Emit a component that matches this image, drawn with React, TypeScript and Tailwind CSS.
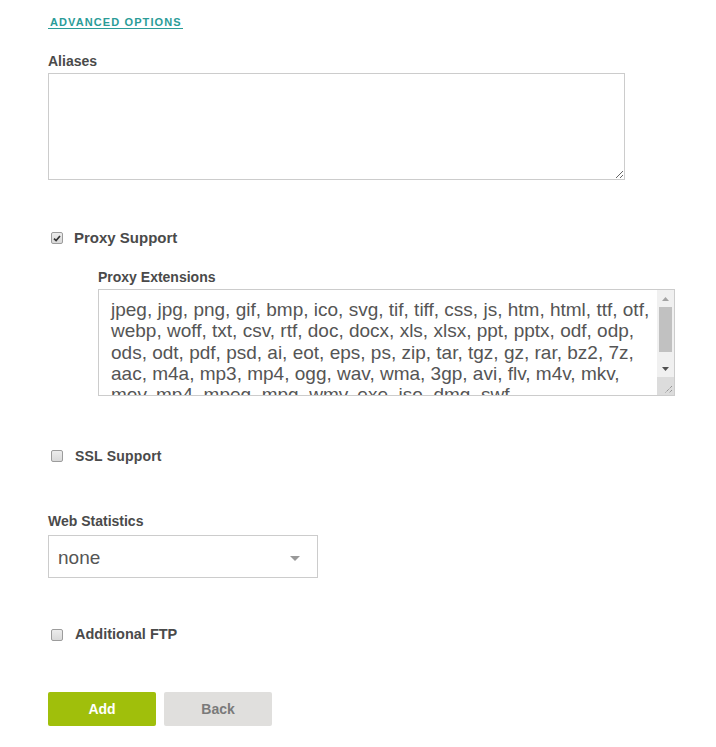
import React from 'react';

const extensionLines = [
  'jpeg, jpg, png, gif, bmp, ico, svg, tif, tiff, css, js, htm, html, ttf, otf,',
  'webp, woff, txt, csv, rtf, doc, docx, xls, xlsx, ppt, pptx, odf, odp,',
  'ods, odt, pdf, psd, ai, eot, eps, ps, zip, tar, tgz, gz, rar, bz2, 7z,',
  'aac, m4a, mp3, mp4, ogg, wav, wma, 3gp, avi, flv, m4v, mkv,',
  'mov, mp4, mpeg, mpg, wmv, exe, iso, dmg, swf',
];

function Checkbox({ checked }: { checked?: boolean }) {
  return (
    <span className="ml-[3px] w-[12px] h-[12px] shrink-0 rounded-[2px] border border-[#9c9c9c] bg-gradient-to-b from-[#ececec] to-[#d9d9d9] flex items-center justify-center">
      {checked && (
        <svg width="8" height="7" viewBox="0 0 8 7">
          <path d="M1 3.6 L3.1 5.6 L7 1" stroke="#333" strokeWidth="1.7" fill="none" />
        </svg>
      )}
    </span>
  );
}

function Grip() {
  return (
    <svg width="9" height="9" viewBox="0 0 9 9">
      <path d="M8 1 L1 8 M8 5 L5 8" stroke="#777" strokeWidth="1" strokeDasharray="1 1" fill="none" />
    </svg>
  );
}

export default function App() {
  return (
    <div className="w-[716px] min-h-[747px] bg-white pl-[48px] font-['Liberation_Sans',Arial,sans-serif] text-[#4a4a4a]">
      {/* Advanced options link */}
      <div className="pt-[16px] flex">
        <a
          href="#"
          className="block pl-[2px] pr-[1px] text-[11px] leading-[12px] font-bold tracking-[1.1px] text-[#2b9c98] border-b border-[#2b9c98]"
        >
          ADVANCED OPTIONS
        </a>
      </div>

      {/* Aliases */}
      <label className="block mt-[22px] text-[14px] leading-[20px] font-bold">Aliases</label>
      <textarea className="mt-[2px] block w-[577px] h-[107px] border border-[#cccccc] bg-white outline-none" />

      {/* Proxy support */}
      <div className="mt-[48px] h-[20px] flex items-center gap-[11px]">
        <Checkbox checked />
        <span className="text-[15px] font-bold">Proxy Support</span>
      </div>

      <div className="pl-[50px]">
        <label className="block mt-[19px] text-[14px] leading-[20px] font-bold">Proxy Extensions</label>
        <div className="mt-[2px] w-[577px] h-[107px] border border-[#cccccc] flex">
          <div className="flex-1 overflow-hidden pl-[12px] pt-[9px] text-[19px] leading-[21.33px] text-[#555]">
            {extensionLines.map((l) => (
              <div key={l} className="whitespace-nowrap">{l}</div>
            ))}
          </div>
          <div className="w-[17px] flex flex-col bg-[#f0f0f0]">
            <div className="h-[17px] flex items-center justify-center">
              <svg width="7" height="4" viewBox="0 0 7 4"><path d="M0 4 L3.5 0 L7 4 Z" fill="#a3a3a3" /></svg>
            </div>
            <div className="h-[53px] px-[2px]">
              <div className="h-[45px] bg-[#c1c1c1]" />
            </div>
            <div className="h-[17px] flex items-center justify-center">
              <svg width="7" height="4" viewBox="0 0 7 4"><path d="M0 0 L7 0 L3.5 4 Z" fill="#505050" /></svg>
            </div>
            <div className="flex-1 bg-[#dcdcdc] flex items-end justify-end pr-[1px] pb-[1px]">
              <Grip />
            </div>
          </div>
        </div>
      </div>

      {/* SSL support */}
      <div className="mt-[50px] h-[20px] flex items-center gap-[12px]">
        <Checkbox />
        <span className="text-[14px] font-bold tracking-[0.2px]">SSL Support</span>
      </div>

      {/* Web statistics */}
      <label className="block mt-[45px] text-[14px] leading-[20px] font-bold">Web Statistics</label>
      <div className="mt-[4px] w-[270px] h-[43px] border border-[#cccccc] flex items-center justify-between pl-[9px] pr-[17px] pt-[4px]">
        <span className="text-[19px] text-[#555]">none</span>
        <svg width="10" height="5" viewBox="0 0 10 5"><path d="M0 0 L10 0 L5 5 Z" fill="#999" /></svg>
      </div>

      {/* Additional FTP */}
      <div className="mt-[47px] h-[20px] flex items-center gap-[12px]">
        <Checkbox />
        <span className="text-[14.5px] font-bold">Additional FTP</span>
      </div>

      {/* Actions */}
      <div className="mt-[47px] flex gap-[8px] pb-[20px]">
        <button className="w-[108px] h-[34px] rounded-[2px] bg-[#a0bf0b] text-white text-[14px] font-bold">Add</button>
        <button className="w-[108px] h-[34px] rounded-[2px] bg-[#e0dfdd] text-[#7a7a7a] text-[14px] font-bold">Back</button>
      </div>
    </div>
  );
}
